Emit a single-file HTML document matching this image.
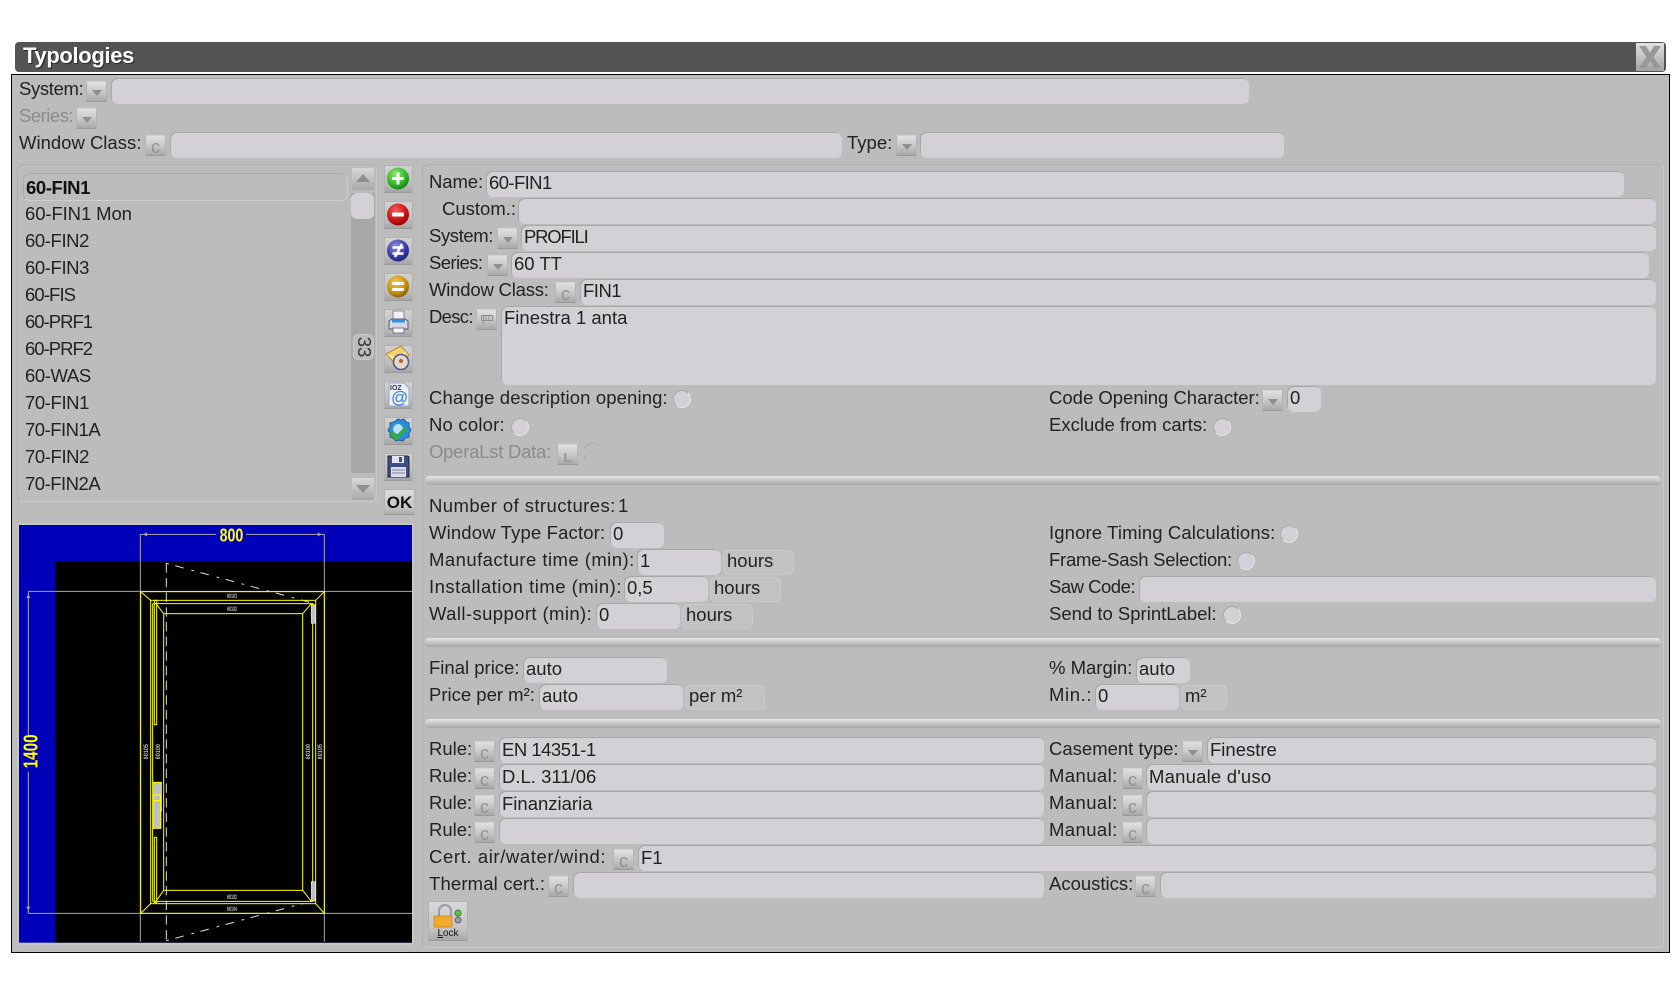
<!DOCTYPE html>
<html><head><meta charset="utf-8"><title>Typologies</title>
<style>
html,body{margin:0;padding:0;background:#fff;width:1680px;height:989px;overflow:hidden}
body{position:relative;font-family:"Liberation Sans",sans-serif}
div,svg,span{position:absolute;box-sizing:border-box}
.t{white-space:pre;font-size:18.5px;line-height:24px;color:#222}
.g{color:#8b8b8b}
.li{letter-spacing:-.4px}
.f{background:#d3d1d5;border-radius:6px;height:25px;box-shadow:-1px -1px 0 #a8a8a8;font-size:18.5px;line-height:21px;padding-left:2px;color:#222;white-space:pre}
.v{line-height:23px}
.u{background:#c2c2c2;border:1px solid #cbcbcb;border-radius:6px;height:25px;font-size:18.5px;line-height:20px;padding-left:3px;color:#222;white-space:pre}
.b{width:21px;height:21px;background:linear-gradient(#e0e0e0,#cbcbcb 45%,#a9a9a9);border:1px solid #b4b4b4;border-bottom-color:#999;border-top-color:#d2d2d2}
.d:after{content:"";position:absolute;left:5px;top:8px;border:5px solid transparent;border-top:6px solid #8f8f8f;border-bottom:0}
.c{color:#939393;font-size:18px;line-height:21px;text-align:center;padding-top:1px}
.r{width:18px;height:18px;border-radius:50%;background:#d3d1d5;border:1px solid #aaa;border-right-color:#e4e4e4;border-bottom-color:#e4e4e4}
.s{left:425px;width:1236px;height:9px;border-radius:4px;background:linear-gradient(#e6e6e6,#c6c6c6 50%,#a5a5a5)}
.k{left:384px;width:29px;height:28px;background:linear-gradient(#d2d2d2,#bdbdbd 70%,#a6a6a6);border:1px solid #b2b2b2;border-bottom-color:#9a9a9a}
.k svg{left:-1px;top:-1px}
</style></head><body>

<div style="left:15px;top:42px;width:1651px;height:30px;background:#535552;border-radius:4px"></div>
<div style="left:23px;top:42px;color:#fff;font-size:22px;letter-spacing:-.35px;font-weight:bold;line-height:28px;text-shadow:1px 1px 1px #222">Typologies</div>
<svg style="left:1636px;top:43px" width="28" height="28" viewBox="0 0 28 28"><defs><linearGradient id="cl" x1="0" y1="0" x2="0" y2="1"><stop offset="0" stop-color="#e2e2e2"/><stop offset="1" stop-color="#a2a2a2"/></linearGradient></defs><rect width="28" height="28" fill="url(#cl)"/><path d="M3 3h7l4 7 4-7h7l-7.500 11 7.500 11h-7l-4-7-4 7H3l7.500-11z" fill="#989898"/></svg>

<div style="left:11px;top:74px;width:1659px;height:879px;background:#bcbcbc;border:1px solid #000"></div>

<!-- top filters -->
<div class="t" style="left:19px;top:77px;letter-spacing:-.35px">System:</div><div class="b d" style="left:86px;top:81px"></div>
<div class="f" style="left:112px;top:79px;width:1137px"></div>
<div class="t g" style="left:19px;top:104px;letter-spacing:-.5px">Series:</div><div class="b d" style="left:76px;top:108px"></div>
<div class="t" style="left:19px;top:131px">Window Class:</div><div class="b c" style="left:145px;top:135px">c</div>
<div class="f" style="left:171px;top:133px;width:671px"></div>
<div class="t" style="left:847px;top:131px">Type:</div><div class="b d" style="left:896px;top:135px"></div>
<div class="f" style="left:921px;top:133px;width:363px"></div>

<!-- list -->
<div style="left:17px;top:164px;width:360px;height:338px;border:1px solid #acacac;border-right-color:#c9c9c9;border-bottom-color:#c9c9c9;border-radius:6px"></div>
<div style="left:23px;top:173px;width:325px;height:28px;border:1px solid #aaa;border-right-color:#cfcfcf;border-bottom-color:#cfcfcf;border-radius:7px"></div>
<div class="t li" style="left:26px;top:176px;font-weight:bold;color:#111">60-FIN1</div>
<div class="t" style="left:25px;top:202px;letter-spacing:-.1px">60-FIN1 Mon</div>
<div class="t li" style="left:25px;top:229px">60-FIN2</div>
<div class="t li" style="left:25px;top:256px">60-FIN3</div>
<div class="t li" style="left:25px;top:283px;letter-spacing:-.9px">60-FIS</div>
<div class="t li" style="left:25px;top:310px;letter-spacing:-1px">60-PRF1</div>
<div class="t li" style="left:25px;top:337px;letter-spacing:-1px">60-PRF2</div>
<div class="t li" style="left:25px;top:364px">60-WAS</div>
<div class="t li" style="left:25px;top:391px">70-FIN1</div>
<div class="t li" style="left:25px;top:418px;letter-spacing:-.5px">70-FIN1A</div>
<div class="t li" style="left:25px;top:445px">70-FIN2</div>
<div class="t li" style="left:25px;top:472px;letter-spacing:-.5px">70-FIN2A</div>
<!-- scrollbar -->
<div style="left:351px;top:193px;width:24px;height:280px;background:#a8a8a8"></div>
<div style="left:352px;top:168px;width:22px;height:22px;background:linear-gradient(#d8d8d8,#a9a9a9)"></div>
<div style="left:356px;top:174px;border:7px solid transparent;border-bottom:8px solid #909090;border-top:0"></div>
<div style="left:351px;top:193px;width:23px;height:26px;background:#d3d1d5;border-radius:6px"></div>
<div style="left:353px;top:334px;width:21px;height:26px;background:#bcbcbc;border:1px solid #c8c8c8;border-radius:5px"></div>
<div class="t" style="left:352px;top:335px;width:24px;height:24px;transform:rotate(90deg);font-size:18.5px;line-height:24px;text-align:center;font-weight:normal;color:#333">33</div>
<div style="left:352px;top:478px;width:22px;height:22px;background:linear-gradient(#d8d8d8,#a9a9a9)"></div>
<div style="left:356px;top:485px;border:7px solid transparent;border-top:8px solid #909090;border-bottom:0"></div>

<!-- toolbar -->
<svg width="0" height="0" style="left:0;top:0"><defs>
<radialGradient id="gg" cx=".4" cy=".3" r=".8"><stop offset="0" stop-color="#8fe86a"/><stop offset=".6" stop-color="#2fb52a"/><stop offset="1" stop-color="#146b14"/></radialGradient>
<radialGradient id="gr" cx=".4" cy=".3" r=".8"><stop offset="0" stop-color="#f06060"/><stop offset=".6" stop-color="#cc1010"/><stop offset="1" stop-color="#6e0808"/></radialGradient>
<radialGradient id="gb" cx=".4" cy=".3" r=".8"><stop offset="0" stop-color="#8c8ce0"/><stop offset=".6" stop-color="#3a3aa8"/><stop offset="1" stop-color="#1c1c60"/></radialGradient>
<radialGradient id="gy" cx=".4" cy=".3" r=".8"><stop offset="0" stop-color="#f0c850"/><stop offset=".6" stop-color="#c98f10"/><stop offset="1" stop-color="#6e5008"/></radialGradient>
</defs></svg>
<div class="k" style="top:165px"><svg width="29" height="28" viewBox="0 0 29 28"><circle cx="14" cy="13.500" r="11" fill="url(#gg)"/><path d="M12.500 7.500h3v4.500h4.500v3h-4.500v4.500h-3V15H8v-3h4.500z" fill="#fff"/></svg></div>
<div class="k" style="top:201px"><svg width="29" height="28" viewBox="0 0 29 28"><circle cx="14" cy="13.500" r="11" fill="url(#gr)"/><rect x="8" y="11.500" width="12" height="4" rx="1" fill="#fff"/></svg></div>
<div class="k" style="top:237px"><svg width="29" height="28" viewBox="0 0 29 28"><circle cx="14" cy="13.500" r="11" fill="url(#gb)"/><path d="M8.500 10.500h11M8.500 16.500h11M18 7l-7 13" stroke="#fff" stroke-width="2.500" fill="none"/></svg></div>
<div class="k" style="top:273px"><svg width="29" height="28" viewBox="0 0 29 28"><circle cx="14" cy="13.500" r="11" fill="url(#gy)"/><rect x="8" y="9" width="12" height="3" rx="1" fill="#fff"/><rect x="8" y="15" width="12" height="3" rx="1" fill="#fff"/></svg></div>
<div class="k" style="top:309px"><svg width="29" height="28" viewBox="0 0 29 28"><rect x="9" y="2" width="11" height="10" fill="#f2f2f2" stroke="#889"/><path d="M5 12l3-2h13l3 2v8H5z" fill="#d4d8e8" stroke="#556"/><rect x="8" y="10" width="13" height="3.500" fill="#2f8fe8"/><rect x="9" y="19" width="11" height="5" fill="#f4f4f4" stroke="#778"/></svg></div>
<div class="k" style="top:345px"><svg width="29" height="28" viewBox="0 0 29 28"><path d="M2 9L17 1l8 9-12 11z" fill="#f3d071" stroke="#c08a30"/><path d="M4 10l9 4 9-7" stroke="#fff3c8" stroke-width="1.500" fill="none"/><circle cx="17" cy="17" r="7.500" fill="#e8d8c8" stroke="#4a5a90" stroke-width="1.500"/><circle cx="17" cy="16" r="2" fill="#b06040"/></svg></div>
<div class="k" style="top:381px"><svg width="29" height="28" viewBox="0 0 29 28"><path d="M5 2h15l5 5v18H5z" fill="#e8f0fa" stroke="#9ab"/><text x="6" y="9" font-family="Liberation Sans" font-size="7" font-weight="bold" fill="#334">IOZ</text><text x="7" y="22" font-family="Liberation Sans" font-size="17" fill="#3a7ad8">@</text></svg></div>
<div class="k" style="top:417px"><svg width="29" height="28" viewBox="0 0 29 28"><path d="M14 2l3 1 3-1 2 3 3 1v4l2 3-2 3v4l-4 1-2 3-4-1-3 1-3-3-3-1 0-4-2-3 2-3V6l4-1z" fill="#2a8fd8" stroke="#1a5fa0"/><circle cx="14" cy="12" r="5" fill="#bfe0f5"/><path d="M7 15l5 6 10-10" stroke="#35b030" stroke-width="3.500" fill="none"/></svg></div>
<div class="k" style="top:453px"><svg width="29" height="28" viewBox="0 0 29 28"><path d="M4 3h20l1 1v20H4z" fill="#3f4f86" stroke="#223"/><rect x="8" y="3" width="12" height="7" fill="#dfe4f2"/><rect x="15" y="4" width="3" height="5" fill="#3f4f86"/><rect x="7" y="14" width="15" height="10" fill="#d8dcec"/><path d="M8 17h13M8 20h13" stroke="#889"/></svg></div>
<div class="k" style="top:489px;width:31px;height:26px;background:linear-gradient(#dcdcdc,#c8c8c8 70%,#aaa)"><div style="left:0;top:0;width:29px;text-align:center;font-size:17px;line-height:25px;font-weight:bold;color:#111">OK</div></div>

<!-- preview -->
<div style="left:17px;top:523px;width:397px;height:422px;border:2px solid #c6c6c6;border-radius:4px"></div>
<svg style="left:0;top:510px" width="420" height="450" viewBox="0 0 1260 1350" font-family="Liberation Sans,sans-serif">
<rect x="57" y="45" width="1179" height="1253" fill="#0000b8"/>
<rect x="165" y="153" width="1071" height="1145" fill="#000"/>
<g stroke="#a8a8a8" stroke-width="3" fill="none">
<path d="M421 72V1295M973 72V1295M85 244H1236M85 1210H1236M85 244V675M85 785V1210M421 73H648M738 73H973"/>
</g>
<path d="M429 73l12-6v12zM965 73l-12-6v12zM85 252l-6 12h12zM85 1202l-6-12h12z" fill="#a8a8a8"/>
<path d="M499 160V1295" stroke="#ddd" stroke-width="3" fill="none" stroke-dasharray="28 16"/>
<path d="M499 160L934 278M499 1292L910 1180" stroke="#ddd" stroke-width="3" fill="none" stroke-dasharray="8 20 26 24"/>
<g stroke="#ff0" stroke-width="3" fill="none">
<rect x="422" y="245" width="551" height="965"/>
<rect x="452" y="271" width="495" height="910"/>
<rect x="491" y="311" width="417" height="830"/>
<path d="M422 245L452 271M973 245L947 271M422 1210L452 1181M973 1210L947 1181M468 281L491 311M934 281L908 311M468 1174L491 1141M934 1174L908 1141"/>
<path d="M458 281H940M458 1174H940M458 281V1174M938 281V1174"/>
<rect x="463" y="271" width="7" height="373"/>
<rect x="463" y="982" width="7" height="196"/>
</g>
<rect x="459" y="817" width="25" height="138" fill="#c0c0c0"/>
<path d="M459 817H484V905M459 855H482V955H459zM459 872H482" stroke="#ff0" stroke-width="3" fill="none"/>
<rect x="934" y="284" width="12" height="56" fill="#c0c0c0" stroke="#ff0" stroke-width="2"/>
<rect x="934" y="1115" width="12" height="58" fill="#c0c0c0" stroke="#ff0" stroke-width="2"/>
<text x="659" y="94" font-size="56" font-weight="bold" fill="#ff0" textLength="71" lengthAdjust="spacingAndGlyphs">800</text>
<text transform="translate(112,775) rotate(-90)" font-size="60" font-weight="bold" fill="#ff0" textLength="102" lengthAdjust="spacingAndGlyphs">1400</text>
<g font-size="20" font-weight="bold" fill="#bdbdbd">
<text x="681" y="264" textLength="30" lengthAdjust="spacingAndGlyphs">60103</text>
<text x="681" y="303" textLength="30" lengthAdjust="spacingAndGlyphs">60102</text>
<text x="681" y="1167" textLength="30" lengthAdjust="spacingAndGlyphs">60102</text>
<text x="681" y="1203" textLength="30" lengthAdjust="spacingAndGlyphs">60104</text>
<text transform="translate(444,748) rotate(-90)" textLength="46" lengthAdjust="spacingAndGlyphs">60105</text>
<text transform="translate(480,748) rotate(-90)" textLength="46" lengthAdjust="spacingAndGlyphs">60100</text>
<text transform="translate(930,748) rotate(-90)" textLength="46" lengthAdjust="spacingAndGlyphs">60100</text>
<text transform="translate(966,748) rotate(-90)" textLength="46" lengthAdjust="spacingAndGlyphs">60105</text>
</g>
</svg>

<!-- main panel -->
<div style="left:422px;top:164px;width:1242px;height:784px;border:1px solid #acacac;border-right-color:#c9c9c9;border-bottom-color:#c9c9c9;border-radius:6px"></div>

<div class="t" style="left:429px;top:170px;letter-spacing:-.1px">Name:</div><div class="f" style="left:487px;top:172px;width:1137px;letter-spacing:-.6px">60-FIN1</div>
<div class="t" style="left:442px;top:197px">Custom.:</div><div class="f" style="left:519px;top:199px;width:1137px"></div>
<div class="t" style="left:429px;top:224px;letter-spacing:-.4px">System:</div><div class="b d" style="left:497px;top:228px"></div><div class="f" style="left:522px;top:226px;width:1134px;letter-spacing:-1.2px">PROFILI</div>
<div class="t" style="left:429px;top:251px;letter-spacing:-.6px">Series:</div><div class="b d" style="left:487px;top:255px"></div><div class="f" style="left:512px;top:253px;width:1137px">60 TT</div>
<div class="t" style="left:429px;top:278px;letter-spacing:-.2px">Window Class:</div><div class="b c" style="left:555px;top:282px">c</div><div class="f" style="left:581px;top:280px;width:1075px;letter-spacing:-.5px">FIN1</div>
<div class="t" style="left:429px;top:305px;letter-spacing:-.7px">Desc:</div><div class="b" style="left:476px;top:309px"><svg style="left:4px;top:5px" width="12" height="10" viewBox="0 0 12 10"><path d="M.5.500h11v5H.5zM2.500.500v9M5 .5v5M8 .5v5" stroke="#8d8d8d" fill="none"/></svg></div>
<div class="f" style="left:502px;top:307px;width:1154px;height:78px">Finestra 1 anta</div>

<div class="t" style="left:429px;top:386px;letter-spacing:.12px">Change description opening:</div><div class="r" style="left:673px;top:390px"></div>
<div class="t" style="left:1049px;top:386px">Code Opening Character:</div><div class="b d" style="left:1262px;top:390px"></div><div class="f" style="left:1288px;top:387px;width:33px">0</div>
<div class="t" style="left:429px;top:413px;letter-spacing:.2px">No color:</div><div class="r" style="left:511px;top:418px"></div>
<div class="t" style="left:1049px;top:413px">Exclude from carts:</div><div class="r" style="left:1213px;top:418px"></div>
<div class="t g" style="left:429px;top:440px;letter-spacing:-.25px">OperaLst Data:</div><div class="b c" style="left:557px;top:444px;font-size:13px;font-weight:bold;padding-top:2px">L</div>
<svg style="left:584px;top:443px" width="18" height="18"><path d="M2 16A8 8 0 0 1 15 3" stroke="#a8a8a8" fill="none"/></svg>

<div class="s" style="top:476px"></div>

<div class="t" style="left:429px;top:494px;letter-spacing:.42px">Number of structures:</div><div class="t" style="left:618px;top:494px">1</div>
<div class="t" style="left:429px;top:521px;letter-spacing:.15px">Window Type Factor:</div><div class="f" style="left:611px;top:523px;width:53px">0</div>
<div class="t" style="left:429px;top:548px;letter-spacing:.45px">Manufacture time (min):</div><div class="f" style="left:638px;top:550px;width:83px">1</div><div class="u" style="left:723px;top:550px;width:71px">hours</div>
<div class="t" style="left:429px;top:575px;letter-spacing:.5px">Installation time (min):</div><div class="f" style="left:625px;top:577px;width:83px">0,5</div><div class="u" style="left:710px;top:577px;width:71px">hours</div>
<div class="t" style="left:429px;top:602px;letter-spacing:.4px">Wall-support (min):</div><div class="f" style="left:597px;top:604px;width:83px">0</div><div class="u" style="left:682px;top:604px;width:71px">hours</div>
<div class="t" style="left:1049px;top:521px;letter-spacing:.12px">Ignore Timing Calculations:</div><div class="r" style="left:1280px;top:525px"></div>
<div class="t" style="left:1049px;top:548px;letter-spacing:-.25px">Frame-Sash Selection:</div><div class="r" style="left:1237px;top:552px"></div>
<div class="t" style="left:1049px;top:575px;letter-spacing:-.5px">Saw Code:</div><div class="f" style="left:1140px;top:577px;width:516px"></div>
<div class="t" style="left:1049px;top:602px">Send to SprintLabel:</div><div class="r" style="left:1223px;top:606px"></div>

<div class="s" style="top:638px"></div>

<div class="t" style="left:429px;top:656px">Final price:</div><div class="f" style="left:524px;top:658px;width:143px">auto</div>
<div class="t" style="left:429px;top:683px">Price per m²:</div><div class="f" style="left:540px;top:685px;width:143px">auto</div><div class="u" style="left:685px;top:685px;width:80px">per m²</div>
<div class="t" style="left:1049px;top:656px">% Margin:</div><div class="f" style="left:1137px;top:658px;width:53px">auto</div>
<div class="t" style="left:1049px;top:683px;letter-spacing:.6px">Min.:</div><div class="f" style="left:1096px;top:685px;width:83px">0</div><div class="u" style="left:1181px;top:685px;width:46px">m²</div>

<div class="s" style="top:719px"></div>

<div class="t" style="left:429px;top:737px">Rule:</div><div class="b c" style="left:474px;top:741px">c</div><div class="f v" style="left:500px;top:738px;width:544px;letter-spacing:-.5px">EN 14351-1</div>
<div class="t" style="left:429px;top:764px">Rule:</div><div class="b c" style="left:474px;top:768px">c</div><div class="f v" style="left:500px;top:765px;width:544px">D.L. 311/06</div>
<div class="t" style="left:429px;top:791px">Rule:</div><div class="b c" style="left:474px;top:795px">c</div><div class="f v" style="left:500px;top:792px;width:544px">Finanziaria</div>
<div class="t" style="left:429px;top:818px">Rule:</div><div class="b c" style="left:474px;top:822px">c</div><div class="f" style="left:500px;top:819px;width:544px"></div>
<div class="t" style="left:429px;top:845px;letter-spacing:.6px">Cert. air/water/wind:</div><div class="b c" style="left:613px;top:849px">c</div><div class="f v" style="left:639px;top:846px;width:1017px">F1</div>
<div class="t" style="left:429px;top:872px;letter-spacing:.15px">Thermal cert.:</div><div class="b c" style="left:548px;top:876px">c</div><div class="f" style="left:574px;top:873px;width:470px"></div>
<div class="t" style="left:1049px;top:737px">Casement type:</div><div class="b d" style="left:1182px;top:741px"></div><div class="f v" style="left:1208px;top:738px;width:448px">Finestre</div>
<div class="t" style="left:1049px;top:764px;letter-spacing:.4px">Manual:</div><div class="b c" style="left:1122px;top:768px">c</div><div class="f v" style="left:1147px;top:765px;width:509px;letter-spacing:.2px">Manuale d'uso</div>
<div class="t" style="left:1049px;top:791px;letter-spacing:.4px">Manual:</div><div class="b c" style="left:1122px;top:795px">c</div><div class="f" style="left:1147px;top:792px;width:509px"></div>
<div class="t" style="left:1049px;top:818px;letter-spacing:.4px">Manual:</div><div class="b c" style="left:1122px;top:822px">c</div><div class="f" style="left:1147px;top:819px;width:509px"></div>
<div class="t" style="left:1049px;top:872px">Acoustics:</div><div class="b c" style="left:1135px;top:876px">c</div><div class="f" style="left:1161px;top:873px;width:495px"></div>

<!-- lock -->
<div style="left:428px;top:901px;width:40px;height:40px;background:linear-gradient(#d8d8d8,#c4c4c4 70%,#a8a8a8);border:1px solid #b0b0b0;border-bottom-color:#999">
<svg style="left:3px;top:2px" width="34" height="24" viewBox="0 0 34 24"><path d="M7 13V7a6 6 0 0 1 12 0v6" stroke="#9a9ab0" stroke-width="2" fill="none"/><rect x="2" y="12" width="18" height="11" fill="#f1a92e" stroke="#a87010" stroke-width=".5"/><circle cx="26" cy="9" r="3" fill="#5fc43a" stroke="#4a7a4a"/><circle cx="26" cy="16" r="3" fill="#9a9a9a" stroke="#666"/></svg>
<div style="left:0;top:26px;width:38px;text-align:center;font-size:10px;line-height:12px;color:#111"><span style="position:static;text-decoration:underline">L</span>ock</div>
</div>
</body></html>
